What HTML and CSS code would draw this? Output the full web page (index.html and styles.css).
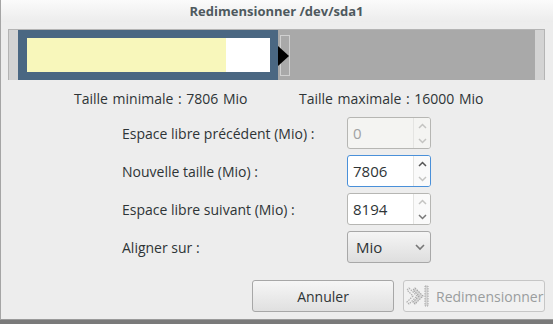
FILE: index.html
```html
<!DOCTYPE html>
<html lang="fr">
<head>
    <meta charset="UTF-8">
    <title>Redimensionner /dev/sda1</title>
    <link rel="stylesheet" href="styles.css">
</head>
<body>

    <div class="window">
        <!-- Title bar -->
        <div class="titlebar">Redimensionner /dev/sda1</div>

        <!-- Partition graphic -->
        <div class="bar">
            <div class="cap"></div>
            <div class="part">
                <div class="used"></div>
                <div class="unused"></div>
            </div>
            <div class="free">
                <div class="handle-box"></div>
                <svg class="handle-arrow" width="11" height="20" viewBox="0 0 11 20"><polygon points="0,0 11,10 0,20" fill="#000"/></svg>
            </div>
            <div class="cap"></div>
        </div>

        <div class="limits">
            <span>Taille minimale : 7806 Mio</span>
            <span>Taille maximale : 16000 Mio</span>
        </div>

        <!-- Form -->
        <div class="form">
            <label>Espace libre précédent (Mio) :</label>
            <div class="spin disabled">
                <span class="value">0</span>
                <div class="arrows">
                    <svg width="9" height="6" viewBox="0 0 9 6"><polyline points="1,5 4.5,1.5 8,5" fill="none" stroke="#c4c4c2" stroke-width="1.5"/></svg>
                    <svg width="9" height="6" viewBox="0 0 9 6"><polyline points="1,1 4.5,4.5 8,1" fill="none" stroke="#c4c4c2" stroke-width="1.5"/></svg>
                </div>
            </div>

            <label>Nouvelle taille (Mio) :</label>
            <div class="spin focused">
                <span class="value">7806</span>
                <div class="arrows">
                    <svg width="9" height="6" viewBox="0 0 9 6"><polyline points="1,5 4.5,1.5 8,5" fill="none" stroke="#555" stroke-width="1.5"/></svg>
                    <svg width="9" height="6" viewBox="0 0 9 6"><polyline points="1,1 4.5,4.5 8,1" fill="none" stroke="#c4c4c2" stroke-width="1.5"/></svg>
                </div>
            </div>

            <label>Espace libre suivant (Mio) :</label>
            <div class="spin">
                <span class="value">8194</span>
                <div class="arrows">
                    <svg width="9" height="6" viewBox="0 0 9 6"><polyline points="1,5 4.5,1.5 8,5" fill="none" stroke="#c4c4c2" stroke-width="1.5"/></svg>
                    <svg width="9" height="6" viewBox="0 0 9 6"><polyline points="1,1 4.5,4.5 8,1" fill="none" stroke="#777" stroke-width="1.5"/></svg>
                </div>
            </div>

            <label>Aligner sur :</label>
            <div class="combo">
                <span>Mio</span>
                <svg width="10" height="7" viewBox="0 0 10 7"><polyline points="1,1 5,5 9,1" fill="none" stroke="#777" stroke-width="1.6"/></svg>
            </div>
        </div>

        <!-- Buttons -->
        <div class="buttons">
            <button class="btn">Annuler</button>
            <button class="btn insensitive">
                <svg width="24" height="24" viewBox="0 0 24 24">
                    <path d="M3 4 L11 12 L3 20 L1 18 L7 12 L1 6 Z" fill="none" stroke="#b0b0b0" stroke-width="1.2" stroke-dasharray="1.5 1"/>
                    <path d="M9 4 L17 12 L9 20 L7 18 L13 12 L7 6 Z" fill="#d6d6d6" stroke="#a8a8a8" stroke-width="1.2" stroke-dasharray="1.5 1"/>
                    <rect x="19" y="2" width="3" height="20" fill="#d6d6d6" stroke="#a8a8a8" stroke-width="1" stroke-dasharray="1.5 1"/>
                </svg>
                <span>Redimensionner</span>
            </button>
        </div>
    </div>

</body>
</html>
```

FILE: styles.css
```css
body {
    margin: 0;
    width: 553px;
    height: 324px;
    background: #7a7a7a;
    font-family: "Open Sans", sans-serif;
    font-size: 14px;
    color: #2e3436;
    overflow: hidden;
}
.window {
    height: 320px;
    background: #ededed;
    border-left: 1px solid #a5a5a5;
    box-sizing: border-box;
    border-bottom: 1px solid #9a9a9a;
}
.titlebar {
    height: 22px;
    line-height: 22px;
    text-align: center;
    font-size: 13px;
    font-weight: bold;
    color: #4e595e;
    background: linear-gradient(#fbfbfb, #ececec);
    padding-right: 1px;
}
.bar {
    display: flex;
    margin: 7px 0 0 7px;
    width: 537px;
    height: 51px;
    border: 1px solid #b4b4b4;
    border-bottom: none;
    box-sizing: border-box;
}
.cap {
    width: 9px;
    background: #d3d3d3;
}
.part {
    display: flex;
    width: 260px;
    padding: 8px 8px 8px 9px;
    box-sizing: border-box;
    background: #4a6782;
}
.used {
    width: 199px;
    background: #f8f7bb;
}
.unused {
    flex: 1;
    background: #fff;
}
.free {
    flex: 1;
    position: relative;
    background: #a9a9a9;
}
.handle-box {
    position: absolute;
    left: 2px;
    top: 5px;
    width: 8px;
    height: 39px;
    border: 1px solid #d0d0d0;
}
.handle-arrow {
    position: absolute;
    left: 0;
    top: 16px;
}
.limits {
    display: grid;
    grid-template-columns: 225px auto;
    padding-left: 73px;
    margin-top: 10px;
    height: 18px;
    line-height: 18px;
    word-spacing: 1px;
}
.form {
    display: grid;
    grid-template-columns: 225px 84px;
    grid-auto-rows: 32px;
    row-gap: 6px;
    padding-left: 121px;
    margin-top: 9px;
}
.form label {
    align-self: center;
}
.spin {
    display: flex;
    border: 1px solid #b6b6b3;
    border-radius: 3px;
    background: #fff;
    box-sizing: border-box;
    overflow: hidden;
}
.spin .value {
    flex: 1;
    padding-left: 5px;
    line-height: 30px;
    font-size: 15px;
}
.spin .arrows {
    width: 16px;
    display: flex;
    flex-direction: column;
    align-items: center;
    justify-content: space-around;
    border-left: 1px solid #e4e4e2;
    background: #fafafa;
}
.spin.disabled {
    background: #f4f4f2;
    color: #a0a2a3;
}
.spin.disabled .arrows {
    background: #f4f4f2;
}
.spin.focused {
    border-color: #4a90d9;
}
.combo {
    display: flex;
    align-items: center;
    justify-content: space-between;
    padding: 0 5px 0 8px;
    border: 1px solid #a8a8a8;
    border-radius: 3px;
    background: linear-gradient(#f5f5f5, #dedede);
    box-sizing: border-box;
    font-size: 15px;
}
.buttons {
    display: flex;
    justify-content: flex-end;
    gap: 9px;
    padding-right: 8px;
    margin-top: 17px;
}
.btn {
    display: flex;
    align-items: center;
    justify-content: center;
    width: 142px;
    height: 32px;
    font-family: "Open Sans", sans-serif;
    font-size: 14px;
    color: #2e3436;
    border: 1px solid #a7a7a7;
    border-radius: 3px;
    background: linear-gradient(#f6f6f6, #e0e0e0);
    padding: 0;
}
.btn.insensitive {
    justify-content: flex-start;
    padding-left: 2px;
    gap: 6px;
    color: #9a9d9e;
    border-color: #c6c6c6;
    background: #f1f1f1;
}
```
